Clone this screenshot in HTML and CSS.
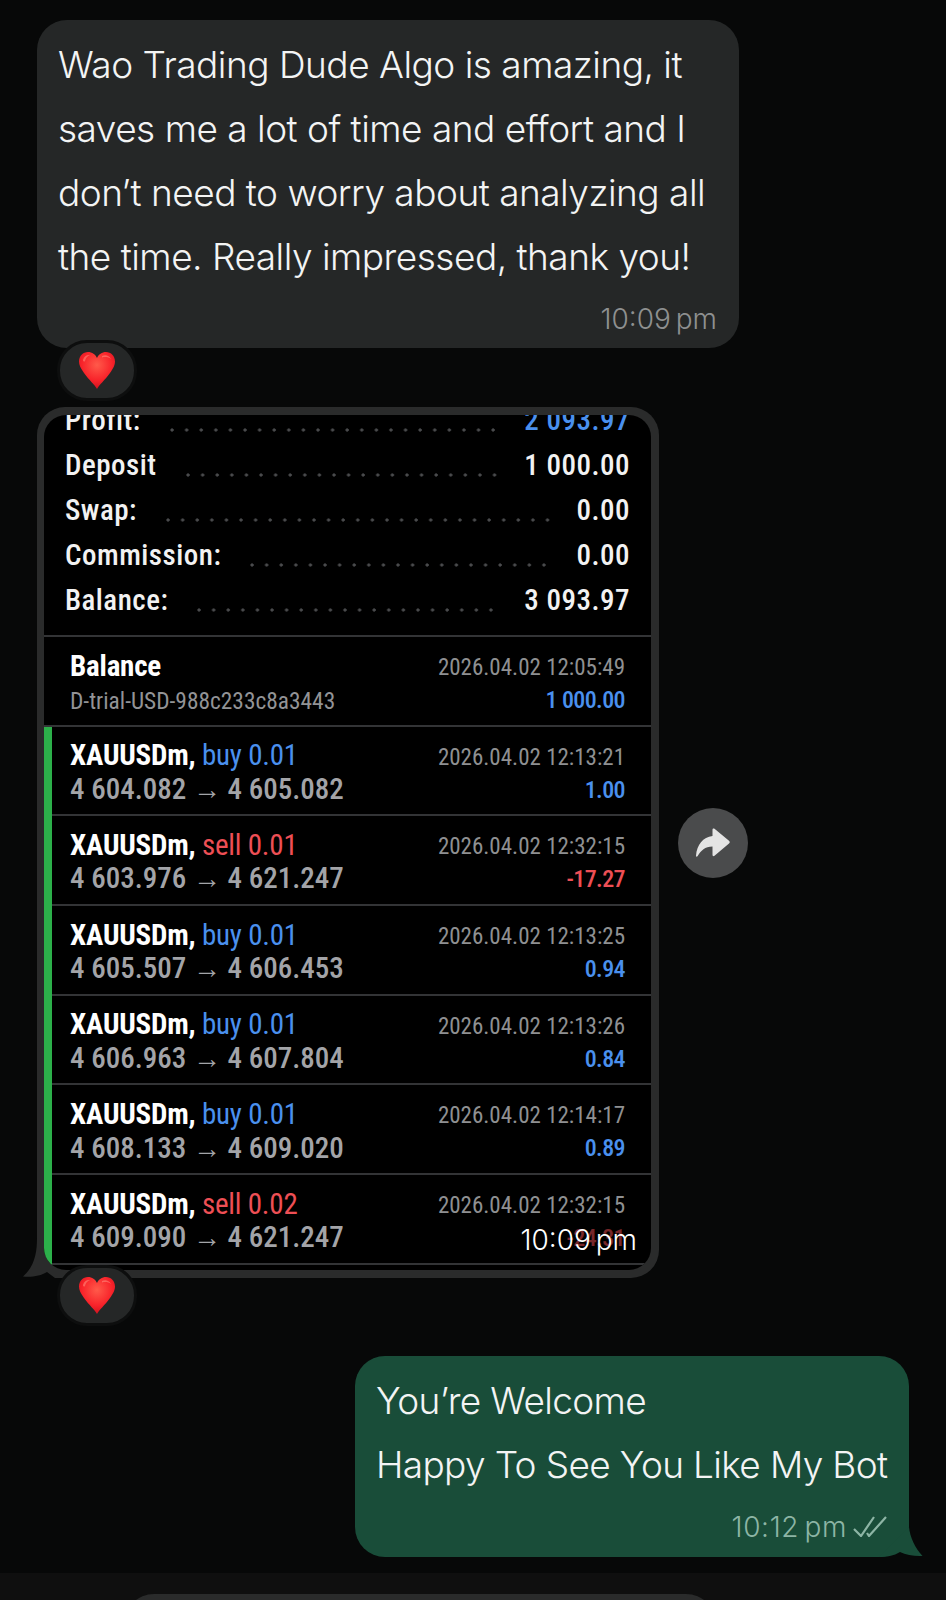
FILE: index.html
```html
<!DOCTYPE html>
<html lang="en">
<head>
  <meta charset="UTF-8">
  <meta name="viewport" content="width=device-width, initial-scale=1.0">
  <title>Chat</title>
  <link rel="stylesheet" href="styles.css">
</head>
<body>

  <svg class="defs" width="0" height="0">
    <defs>
      <radialGradient id="heartFill" cx="50%" cy="35%" r="70%">
        <stop offset="0" stop-color="#ff5a4a"/>
        <stop offset="0.6" stop-color="#f8232a"/>
        <stop offset="1" stop-color="#c8101e"/>
      </radialGradient>
      <symbol id="heart" viewBox="0 0 36 37">
        <path fill="url(#heartFill)" d="M18 37C16 33 10 28 5 21 1.500 16 0 13 0 9.500 0 4 4 0 9 0 13 0 16.500 2.500 18 6 19.500 2.500 23 0 27 0 32 0 36 4 36 9.500 36 13 34.500 16 31 21 26 28 20 33 18 37Z"/>
        <path fill="#ff8f80" opacity="0.55" d="M4 8C5 4 8 2.500 11 3 8.500 4 6.500 6 6 9 5.500 10 3.800 9.500 4 8Z"/>
        <path fill="#ff8f80" opacity="0.55" d="M23 4C26 2.500 30 3 32 7 29.500 5 26 4.500 23 5.500Z"/>
      </symbol>
    </defs>
  </svg>

  <main class="chat">

    <!-- mensaje recibido -->
    <div class="bubble bubble-in">
      <p class="msg">Wao Trading Dude Algo is amazing, it<br>saves me a lot of time and effort and I<br>don’t need to worry about analyzing all<br>the time. Really impressed, thank you!</p>
      <div class="meta">10:09 pm</div>
      <div class="reaction"><svg class="heart"><use href="#heart"/></svg></div>
    </div>

    <!-- captura del terminal -->
    <div class="media-row">
      <div class="card">
        <svg class="tail-left" viewBox="0 0 40 40"><path d="M14 0C14 14 12 28 0 38.500 8 39.500 18 38 24 34L32 40H40V0Z"/></svg>
        <div class="shot">
          <div class="summary">
            <div class="sum-row"><span>Profit:</span><i class="leader"></i><span class="blue">2 093.97</span></div>
            <div class="sum-row"><span>Deposit</span><i class="leader"></i><span>1 000.00</span></div>
            <div class="sum-row"><span>Swap:</span><i class="leader"></i><span>0.00</span></div>
            <div class="sum-row"><span>Commission:</span><i class="leader"></i><span>0.00</span></div>
            <div class="sum-row"><span>Balance:</span><i class="leader"></i><span>3 093.97</span></div>
          </div>

          <div class="deal deal-balance">
            <div class="left">
              <div class="title">Balance</div>
              <div class="sub">D-trial-USD-988c233c8a3443</div>
            </div>
            <div class="right">
              <div class="time">2026.04.02 12:05:49</div>
              <div class="val blue">1 000.00</div>
            </div>
          </div>

          <div class="deals">
            <div class="deal">
              <div class="left">
                <div class="title">XAUUSDm, <span class="side blue">buy 0.01</span></div>
                <div class="price">4 604.082 <span class="arrow">→</span> 4 605.082</div>
              </div>
              <div class="right">
                <div class="time">2026.04.02 12:13:21</div>
                <div class="val blue">1.00</div>
              </div>
            </div>
            <div class="deal">
              <div class="left">
                <div class="title">XAUUSDm, <span class="side red">sell 0.01</span></div>
                <div class="price">4 603.976 <span class="arrow">→</span> 4 621.247</div>
              </div>
              <div class="right">
                <div class="time">2026.04.02 12:32:15</div>
                <div class="val red">-17.27</div>
              </div>
            </div>
            <div class="deal">
              <div class="left">
                <div class="title">XAUUSDm, <span class="side blue">buy 0.01</span></div>
                <div class="price">4 605.507 <span class="arrow">→</span> 4 606.453</div>
              </div>
              <div class="right">
                <div class="time">2026.04.02 12:13:25</div>
                <div class="val blue">0.94</div>
              </div>
            </div>
            <div class="deal">
              <div class="left">
                <div class="title">XAUUSDm, <span class="side blue">buy 0.01</span></div>
                <div class="price">4 606.963 <span class="arrow">→</span> 4 607.804</div>
              </div>
              <div class="right">
                <div class="time">2026.04.02 12:13:26</div>
                <div class="val blue">0.84</div>
              </div>
            </div>
            <div class="deal">
              <div class="left">
                <div class="title">XAUUSDm, <span class="side blue">buy 0.01</span></div>
                <div class="price">4 608.133 <span class="arrow">→</span> 4 609.020</div>
              </div>
              <div class="right">
                <div class="time">2026.04.02 12:14:17</div>
                <div class="val blue">0.89</div>
              </div>
            </div>
            <div class="deal">
              <div class="left">
                <div class="title">XAUUSDm, <span class="side red">sell 0.02</span></div>
                <div class="price">4 609.090 <span class="arrow">→</span> 4 621.247</div>
              </div>
              <div class="right">
                <div class="time">2026.04.02 12:32:15</div>
                <div class="val red dim">-24.31</div>
              </div>
            </div>
          </div>
        </div>
        <div class="meta-over">10:09 pm</div>
        <div class="reaction reaction-card"><svg class="heart"><use href="#heart"/></svg></div>
      </div>

      <button class="forward">
        <svg viewBox="0 0 34 29" width="34" height="29"><path d="M18.500 .8 33 12.700C34 13.600 34 14.600 33 15.500L18.500 27.800C17.500 28.600 16.500 28 16.500 27V18.500C9 18.500 5 22.500 1.500 28.200 .8 29 0 28.700 0 27.700 .8 17 7 8.800 16.500 8V1.700C16.500 .6 17.500 0 18.500 .8Z"/></svg>
      </button>
    </div>

    <!-- mensaje enviado -->
    <div class="bubble bubble-out">
      <p class="msg">You’re Welcome<br>Happy To See You Like My Bot</p>
      <div class="meta">10:12 pm
        <svg class="ticks" viewBox="0 0 34 21" width="34" height="21"><path d="M1 13 8 20 21 1M14 17 16 20 33 1"/></svg>
      </div>
      <svg class="tail-right" viewBox="0 0 44 30"><path d="M30 0C31 10 36 21 43.500 29 36 29.500 27 28 21 25 15 29 7 30 0 30Z"/></svg>
    </div>

  </main>

  <div class="next">
    <div class="next-bubble"></div>
  </div>

</body>
</html>
```

FILE: styles.css
```css
* {
  box-sizing: border-box;
}

html, body {
  margin: 0;
  padding: 0;
}

body {
  width: 946px;
  height: 1600px;
  overflow: hidden;
  background-color: #070808;
  font-family: Inter, "Noto Sans", sans-serif;
  color: #f3f4f4;
}

.defs {
  position: absolute;
}

.chat {
  height: 1573px;
  padding: 20px 0 0 37px;
  display: flex;
  flex-direction: column;
}

/* Burbujas */
.bubble {
  position: relative;
  border-radius: 30px;
  padding: 12.5px 21px 0;
}

.bubble-in {
  width: 702px;
  height: 328px;
  background-color: #252727;
}

.bubble-out {
  width: 554px;
  height: 201px;
  margin-top: 78px;
  margin-left: 318px;
  background-color: #194d39;
}

.msg {
  margin: 0;
  font-size: 37px;
  line-height: 64px;
  font-weight: 360;
  letter-spacing: -0.5px;
  white-space: nowrap;
}

.bubble-out .msg {
  letter-spacing: -0.65px;
}

.meta {
  display: flex;
  justify-content: flex-end;
  align-items: center;
  gap: 6px;
  margin-top: 13px;
  margin-right: 1px;
  font-size: 28px;
  line-height: 34px;
  font-weight: 300;
  word-spacing: -3px;
  color: #8e9090;
}

.bubble-out .meta {
  letter-spacing: 0.6px;
  color: #8db5a5;
}

.ticks {
  fill: none;
  stroke: #8db5a5;
  stroke-width: 2.2;
}

.tail-right {
  position: absolute;
  right: -14px;
  bottom: 0;
  width: 44px;
  height: 30px;
  fill: #194d39;
}

/* Reacciones */
.reaction {
  position: absolute;
  left: 20px;
  bottom: -53px;
  width: 80px;
  height: 61px;
  display: flex;
  align-items: center;
  justify-content: center;
  background-color: #252727;
  border: 3px solid #0d0e0e;
  border-radius: 30px;
}

.reaction-card {
  bottom: -48px;
}

.heart {
  width: 36px;
  height: 37px;
}

/* Tarjeta con la captura */
.media-row {
  display: flex;
  align-items: center;
  gap: 19px;
  margin-top: 59px;
}

.card {
  position: relative;
  width: 622px;
  height: 871px;
  padding: 8px 8px 8px 7px;
  background-color: #2a2b2b;
  border-radius: 28px;
}

.tail-left {
  position: absolute;
  left: -14px;
  bottom: 0;
  width: 40px;
  height: 40px;
  fill: #2a2b2b;
}

.shot {
  position: relative;
  height: 855px;
  overflow: hidden;
  background-color: #000;
  border-radius: 22px;
  font-family: Roboto, "Liberation Sans", sans-serif;
  font-stretch: 75%;
}

.summary {
  margin-top: -17.5px;
  padding: 0 21px 12.5px;
  border-bottom: 2px solid #333436;
}

.sum-row {
  display: flex;
  align-items: center;
  height: 45px;
  font-size: 29px;
  font-weight: 500;
  letter-spacing: 0.5px;
  color: #f2f2f2;
}

.leader {
  flex: 1;
  height: 4px;
  margin: 19px 22px 0 29px;
  background-image: radial-gradient(circle at 2px 2px, #4a4b4d 1.4px, transparent 1.8px);
  background-size: 14.6px 4px;
}

.deal {
  display: flex;
  justify-content: space-between;
  align-items: center;
  height: 89.7px;
  padding: 0 26px 0 18px;
  border-bottom: 2px solid #333436;
}

.deal-balance {
  padding-left: 26px;
}

.left {
  padding-top: 3px;
}

.deal-balance .left {
  padding-top: 5px;
}

.deals {
  border-left: 8px solid #2cb04a;
}

.left div,
.right div {
  height: 32px;
  line-height: 32px;
  white-space: nowrap;
}

.right {
  padding-top: 6px;
  text-align: right;
}

.title {
  font-size: 29px;
  font-weight: 700;
  letter-spacing: -0.2px;
  color: #fff;
}

.side {
  font-weight: 400;
}

.sub {
  margin-top: 3px;
  font-size: 23.4px;
  color: #929396;
}

.price {
  margin-top: 1.5px;
  font-size: 29px;
  font-weight: 500;
  color: #a3a4a8;
}

.arrow {
  font-size: 28px;
  font-weight: 400;
}

.time {
  font-size: 23px;
  color: #8f9092;
}

.right .val {
  font-size: 24px;
  font-weight: 500;
  letter-spacing: -0.6px;
}

.blue {
  color: #4a90ee;
}

.red {
  color: #ee4f55;
}

.dim {
  opacity: 0.5;
}

.meta-over {
  position: absolute;
  right: 22px;
  bottom: 21px;
  font-size: 28px;
  line-height: 34px;
  font-weight: 300;
  word-spacing: -3px;
  color: #fff;
}

.forward {
  width: 70px;
  height: 70px;
  padding: 0;
  border: none;
  border-radius: 50%;
  display: flex;
  align-items: center;
  justify-content: center;
  background-color: #4a4b4c;
  fill: #e4e4e4;
}

/* Franja inferior */
.next {
  height: 27px;
  padding: 21px 230px 0 124px;
  background-color: #0f0f0f;
}

.next-bubble {
  height: 30px;
  background-color: #2a2b2b;
  border-radius: 30px 30px 0 0;
}
```
